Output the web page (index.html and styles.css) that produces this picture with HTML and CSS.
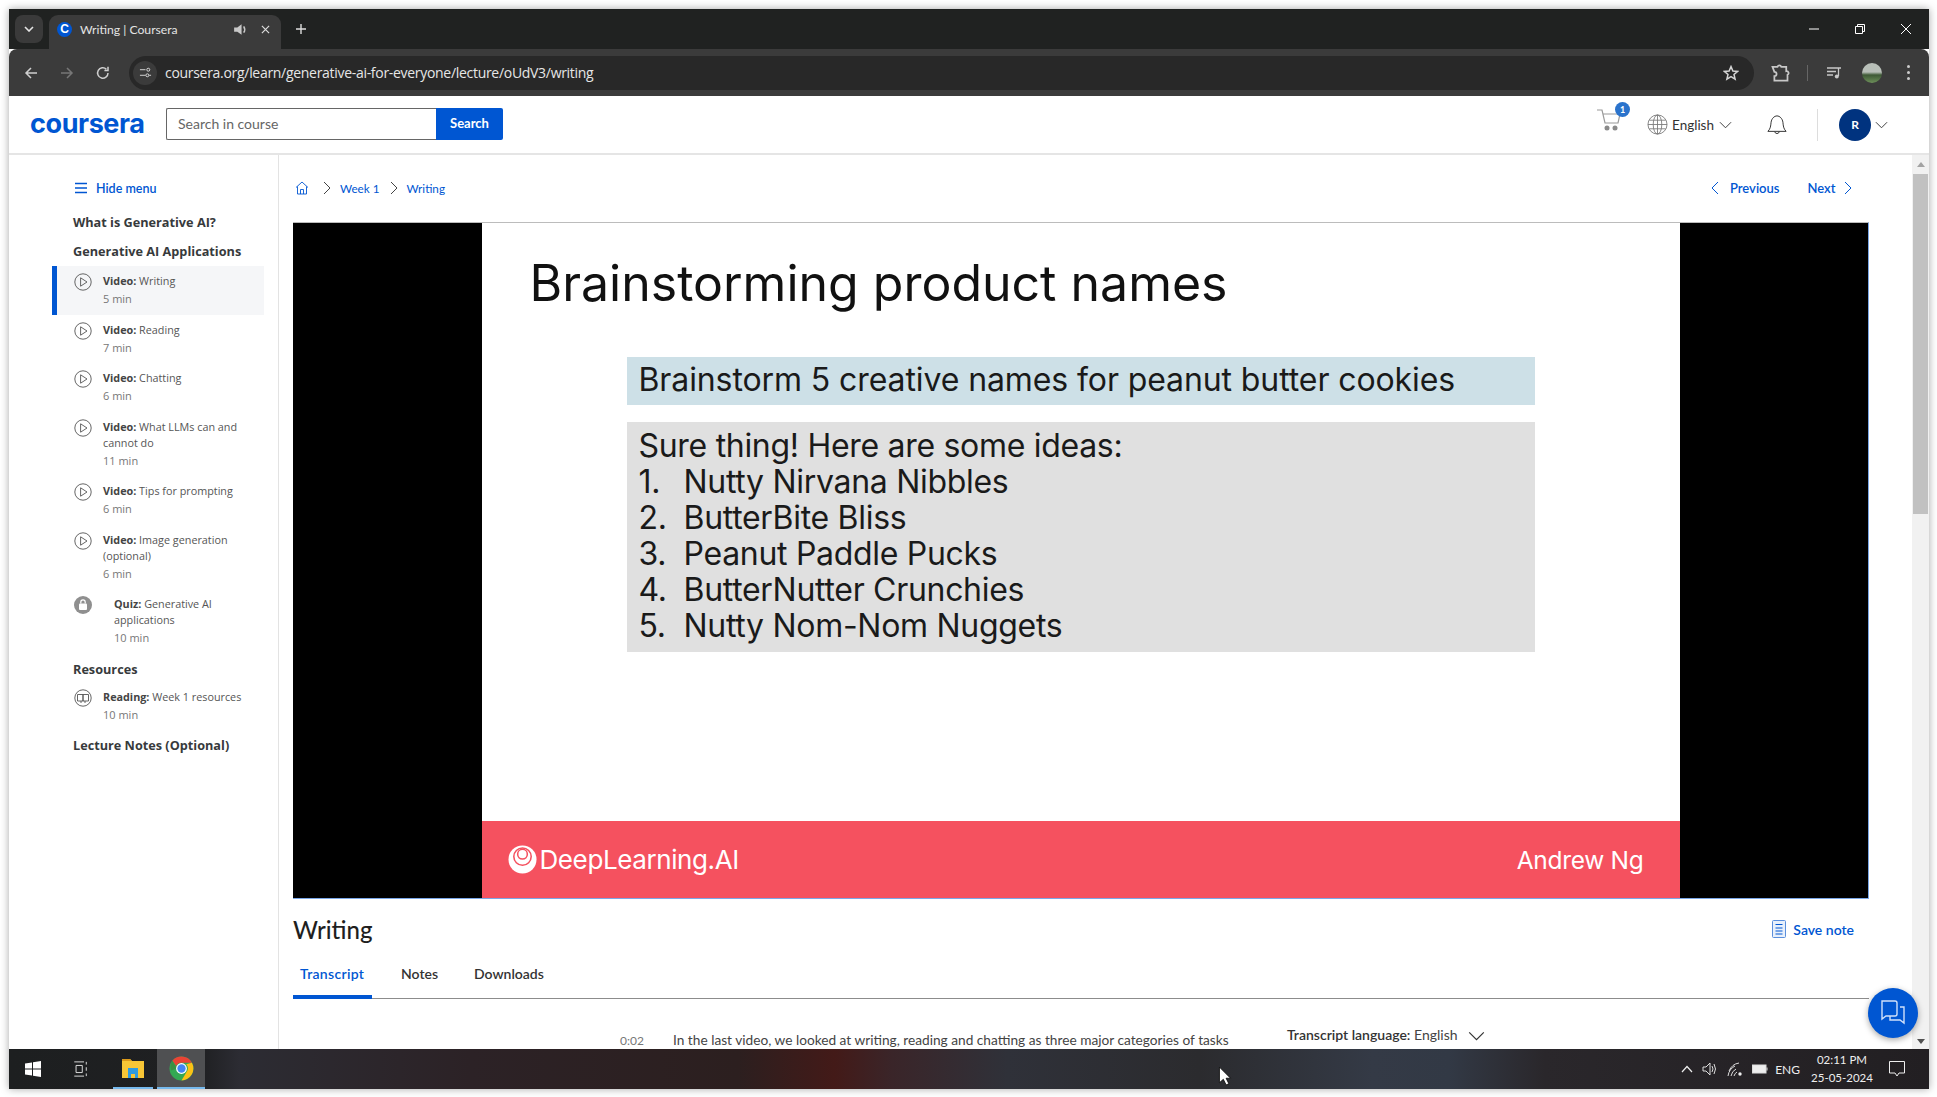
FILE: index.html
```html
<!DOCTYPE html>
<html>
<head>
    <meta charset="utf-8" />
    <title>Writing | Coursera</title>
    <link rel="stylesheet" href="styles.css">
</head>
<body>
    <svg class="defs" width="0" height="0">
        <symbol id="play" viewBox="0 0 18 18"><circle cx="9" cy="9" r="8.2" fill="none" stroke="#555" stroke-width="0.9"/><path d="M6.6 4.8 L13 9 L6.6 13.2 Z" fill="none" stroke="#555" stroke-width="0.9"/></symbol>
        <symbol id="chev" viewBox="0 0 14 8"><path d="M1 1 L7 7 L13 1" fill="none" stroke="currentColor" stroke-width="1"/></symbol>
        <symbol id="right" viewBox="0 0 8 14"><path d="M1 1 L7 7 L1 13" fill="none" stroke="currentColor" stroke-width="1"/></symbol>
    </svg>
    <div class="window">
        <!-- browser tabs -->
        <div class="tabbar">
            <div class="tablist"><svg class="ic10" viewBox="0 0 10 6"><path d="M1 1 L5 5 L9 1" fill="none" stroke="#e4e4e4" stroke-width="1.6"/></svg></div>
            <div class="tab">
                <span class="favicon">C</span>
                <span class="tabtitle">Writing | Coursera</span>
                <svg class="tabsound" viewBox="0 0 16 16"><path d="M2 6 H5 L9 3 V13 L5 10 H2 Z" fill="#c8c8c8"/><path d="M11 5 Q13 8 11 11" fill="none" stroke="#c8c8c8" stroke-width="1.4"/></svg>
                <svg class="tabclose" viewBox="0 0 10 10"><path d="M1 1 L9 9 M9 1 L1 9" stroke="#ddd" stroke-width="1.3"/></svg>
            </div>
            <svg class="newtab" viewBox="0 0 12 12"><path d="M6 1 V11 M1 6 H11" stroke="#ddd" stroke-width="1.4"/></svg>
            <div class="winbtns">
                <svg viewBox="0 0 12 12"><path d="M1 6 H11" stroke="#fff"/></svg>
                <svg viewBox="0 0 12 12"><path d="M1.5 3.5 H8.5 V10.5 H1.5 Z M3.5 3.5 V1.5 H10.5 V8.5 H8.5" fill="none" stroke="#fff"/></svg>
                <svg viewBox="0 0 12 12"><path d="M1 1 L11 11 M11 1 L1 11" stroke="#fff"/></svg>
            </div>
        </div>
        <div class="toolbar">
            <svg class="navbtn" viewBox="0 0 16 16"><path d="M14 8 H3 M8 3 L3 8 L8 13" fill="none" stroke="#cfcfcf" stroke-width="1.5"/></svg>
            <svg class="navbtn" viewBox="0 0 16 16"><path d="M2 8 H13 M8 3 L13 8 L8 13" fill="none" stroke="#777" stroke-width="1.5"/></svg>
            <svg class="navbtn" viewBox="0 0 16 16"><path d="M13 8 A5.2 5.2 0 1 1 11.4 4.2 M13 1.8 V5.4 H9.4" fill="none" stroke="#cfcfcf" stroke-width="1.5"/></svg>
            <div class="omnibox">
                <span class="siteicon"><svg viewBox="0 0 14 14"><path d="M1 4 H7 M11 10 H13 M1 10 H7" stroke="#ddd"/><circle cx="10" cy="4" r="1.6" fill="none" stroke="#ddd"/><circle cx="9" cy="10" r="1.6" fill="none" stroke="#ddd"/></svg></span>
                <span class="url">coursera.org/learn/generative-ai-for-everyone/lecture/oUdV3/writing</span>
                <svg class="star" viewBox="0 0 16 16"><path d="M8 1.6 L9.9 6 L14.6 6.4 L11 9.5 L12.1 14.2 L8 11.7 L3.9 14.2 L5 9.5 L1.4 6.4 L6.1 6 Z" fill="none" stroke="#d5d5d5" stroke-width="1.5"/></svg>
            </div>
            <svg class="extbtn" viewBox="0 0 16 16"><path d="M2 3 H6 A1.6 1.6 0 0 1 9 3 H13 V6.5 A1.6 1.6 0 0 1 14 9.5 V14 H3.5 V10.5 A1.6 1.6 0 0 0 3.5 7 Z" fill="none" stroke="#c8c8c8" stroke-width="1.4"/></svg>
            <span class="toolsep"></span>
            <svg class="mediabtn" viewBox="0 0 16 16"><path d="M1 3 H11 M1 6.5 H10 M1 10 H7 M11 3 H15 M12.5 3 V11" stroke="#c8c8c8" stroke-width="1.3" fill="none"/><circle cx="10.8" cy="11.6" r="2" fill="#c8c8c8"/></svg>
            <span class="profile"></span>
            <span class="dots"><i></i><i></i><i></i></span>
        </div>

        <!-- coursera header -->
        <header class="sitehead">
            <a class="logo">coursera</a>
            <div class="search">
                <span class="searchinput">Search in course</span>
                <span class="searchbtn">Search</span>
            </div>
            <div class="headright">
                <div class="cart">
                    <svg viewBox="0 0 26 24"><path d="M1 2 H6 L9 15 H22 L24 6 H7" fill="none" stroke="#9a9a9a" stroke-width="1.2"/><circle cx="11" cy="20" r="2.5" fill="#8a8a8a"/><circle cx="19" cy="20" r="2.5" fill="#8a8a8a"/></svg>
                    <span class="badge">1</span>
                </div>
                <svg class="globe" viewBox="0 0 22 22"><g fill="none" stroke="#777" stroke-width="0.9"><circle cx="11" cy="11" r="10"/><ellipse cx="11" cy="11" rx="4.5" ry="10"/><path d="M11 1 V21 M1 11 H21 M2.4 6.5 H19.6 M2.4 15.5 H19.6"/></g></svg>
                <span class="lang">English</span>
                <svg class="chev13"><use href="#chev"/></svg>
                <svg class="bell" viewBox="0 0 22 24"><path d="M1 19 C4 16 4 13 4.5 9 C5 5 8 2 11 2 C14 2 17 5 17.5 9 C18 13 18 16 21 19 Z M8.5 19.5 A2.6 2.6 0 0 0 13.5 19.5" fill="none" stroke="#222" stroke-width="1"/></svg>
                <span class="headsep"></span>
                <span class="avatar">R</span>
                <svg class="chev13"><use href="#chev"/></svg>
            </div>
        </header>

        <div class="content">
            <aside class="sidebar">
                <div class="hidemenu">
                    <svg viewBox="0 0 12 12"><path d="M0 1.5 H12 M0 6 H12 M0 10.5 H12" stroke="#0056d2" stroke-width="1.5"/></svg>
                    <span>Hide menu</span>
                </div>
                <h3 class="modhead first">What is Generative AI?</h3>
                <h3 class="modhead">Generative AI Applications</h3>
                <ul class="items">
                    <li class="item active"><svg class="itemicon"><use href="#play"/></svg><div><p><b>Video:</b> Writing</p><small>5 min</small></div></li>
                    <li class="item"><svg class="itemicon"><use href="#play"/></svg><div><p><b>Video:</b> Reading</p><small>7 min</small></div></li>
                    <li class="item"><svg class="itemicon"><use href="#play"/></svg><div><p><b>Video:</b> Chatting</p><small>6 min</small></div></li>
                    <li class="item"><svg class="itemicon"><use href="#play"/></svg><div><p><b>Video:</b> What LLMs can and cannot do</p><small>11 min</small></div></li>
                    <li class="item"><svg class="itemicon"><use href="#play"/></svg><div><p><b>Video:</b> Tips for prompting</p><small>6 min</small></div></li>
                    <li class="item"><svg class="itemicon"><use href="#play"/></svg><div><p><b>Video:</b> Image generation (optional)</p><small>6 min</small></div></li>
                    <li class="item quiz">
                        <svg class="itemicon" viewBox="0 0 18 18"><circle cx="9" cy="9" r="9" fill="#8f8f8f"/><rect x="5" y="7.5" width="8" height="6.5" rx="1" fill="#fff"/><path d="M6.8 7.5 V6 A2.2 2.2 0 0 1 11.2 6 V7.5" fill="none" stroke="#fff" stroke-width="1.2"/></svg>
                        <div><p><b>Quiz:</b> Generative AI applications</p><small>10 min</small></div>
                    </li>
                </ul>
                <h3 class="modhead res">Resources</h3>
                <ul class="items">
                    <li class="item">
                        <svg class="itemicon" viewBox="0 0 18 18"><circle cx="9" cy="9" r="8.2" fill="none" stroke="#555" stroke-width="0.9"/><path d="M3.5 5.5 H9 V12 H3.5 Z M9 5.5 H14.5 V12 H9 Z M7 12 V14 M11 12 V14" fill="none" stroke="#555" stroke-width="0.9"/></svg>
                        <div><p><b>Reading:</b> Week 1 resources</p><small>10 min</small></div>
                    </li>
                </ul>
                <h3 class="modhead last">Lecture Notes (Optional)</h3>
            </aside>

            <main class="main">
                <div class="crumbrow">
                    <svg class="home" viewBox="0 0 14 14"><path d="M1 6.5 L7 1 L13 6.5 M2.5 5.5 V13 H11.5 V5.5 M5.5 13 V8.5 H8.5 V13" fill="none" stroke="#0056d2" stroke-width="0.9"/></svg>
                    <svg class="sep"><use href="#right"/></svg>
                    <a class="crumb">Week 1</a>
                    <svg class="sep"><use href="#right"/></svg>
                    <a class="crumb">Writing</a>
                    <div class="pager">
                        <svg class="pagearrow flip"><use href="#right"/></svg>
                        <a>Previous</a>
                        <a class="nextlink">Next</a>
                        <svg class="pagearrow"><use href="#right"/></svg>
                    </div>
                </div>

                <div class="video">
                    <div class="slide">
                        <div class="slidebody">
                            <h1 class="slidetitle">Brainstorming product names</h1>
                            <div class="prompt">Brainstorm 5 creative names for peanut butter cookies</div>
                            <div class="answer">
                                <p>Sure thing! Here are some ideas:</p>
                                <ol>
                                    <li><span>1.</span>Nutty Nirvana Nibbles</li>
                                    <li><span>2.</span>ButterBite Bliss</li>
                                    <li><span>3.</span>Peanut Paddle Pucks</li>
                                    <li><span>4.</span>ButterNutter Crunchies</li>
                                    <li><span>5.</span>Nutty Nom-Nom Nuggets</li>
                                </ol>
                            </div>
                        </div>
                        <div class="slidefoot">
                            <svg viewBox="0 0 30 30"><circle cx="15" cy="15" r="14.5" fill="#fff"/><circle cx="15" cy="12" r="9" fill="none" stroke="#f5515f" stroke-width="1.6"/><circle cx="15" cy="9.5" r="5" fill="none" stroke="#f5515f" stroke-width="1.6"/></svg>
                            <span class="dl">DeepLearning.AI</span>
                            <span class="presenter">Andrew Ng</span>
                        </div>
                    </div>
                </div>

                <div class="titlerow">
                    <h2>Writing</h2>
                    <a class="savenote">
                        <svg viewBox="0 0 14 18"><rect x="0.5" y="0.5" width="13" height="17" rx="1" fill="#e8f0fb" stroke="#5b8fdc"/><path d="M3.5 4.5 H10.5 M3.5 8 H10.5 M3.5 11 H10.5 M3.5 14 H10.5" stroke="#0056d2"/></svg>
                        Save note
                    </a>
                </div>

                <nav class="tabs">
                    <a class="on">Transcript</a>
                    <a>Notes</a>
                    <a>Downloads</a>
                </nav>

                <div class="transcript">
                    <span class="time">0:02</span>
                    <span class="line">In the last video, we looked at writing, reading and chatting as three major categories of tasks</span>
                    <span class="tlang"><b>Transcript language:</b> English</span>
                    <svg class="chev18"><use href="#chev"/></svg>
                </div>
            </main>

            <div class="scrollbar">
                <span class="arrow up"></span>
                <span class="thumb"></span>
                <span class="arrow down"></span>
            </div>

            <div class="chatfab">
                <svg viewBox="0 0 28 28"><path d="M3 2 H16 A2 2 0 0 1 18 4 V15 A2 2 0 0 1 16 17 H7 L3 20 Z" fill="none" stroke="#cfe0fa" stroke-width="1.4"/><path d="M21 8 H25 V24 L21 21 H11 V17" fill="none" stroke="#cfe0fa" stroke-width="1.4"/></svg>
            </div>
        </div>

        <!-- windows taskbar -->
        <footer class="taskbar">
            <svg class="tb win" viewBox="0 0 16 16"><path d="M0 2.4 L7 1.4 V7.4 H0 Z M8 1.2 L16 0 V7.4 H8 Z M0 8.4 H7 V14.6 L0 13.6 Z M8 8.4 H16 V16 L8 14.8 Z" fill="#fff"/></svg>
            <svg class="tb view" viewBox="0 0 16 18"><path d="M1 1 H12 M1 17 H12 M3 5 H10 V13 H3 Z M14.5 1 V4 M14.5 7 V11 M14.5 14 V17" fill="none" stroke="#eee"/></svg>
            <div class="tbapp explorer">
                <svg viewBox="0 0 22 22"><path d="M0 2 H8 L10 4 H22 V21 H0 Z" fill="#f8c636"/><path d="M0 2 H8 L10 4 H0 Z" fill="#dc9a1a"/><path d="M6 11 H16 V21 H13 V17 H9 V21 H6 Z" fill="#2f9be0"/></svg>
            </div>
            <div class="tbapp chrome">
                <svg viewBox="0 0 24 24"><circle cx="12" cy="12" r="11.5" fill="#34a853"/><path d="M12 .5 A11.5 11.5 0 0 1 22 6.5 H12 A5.5 5.5 0 0 0 7 9.5 L3.2 4.5 A11.5 11.5 0 0 1 12 .5 Z" fill="#ea4335"/><path d="M22 6.5 A11.5 11.5 0 0 1 12 23.5 L17 15 A5.5 5.5 0 0 0 16.5 8 Z" fill="#fbc116"/><path d="M3.2 4.5 L7.5 12 L2 14 A11.5 11.5 0 0 1 3.2 4.5 Z" fill="#3b8f43"/><circle cx="12" cy="12" r="5.2" fill="#fff"/><circle cx="12" cy="12" r="4" fill="#4285f4"/></svg>
            </div>
            <div class="tray">
                <svg class="tr up" viewBox="0 0 12 8"><path d="M1 7 L6 1.5 L11 7" fill="none" stroke="#eee" stroke-width="1.2"/></svg>
                <svg class="tr" viewBox="0 0 16 16"><path d="M1 6 H4 L8 2 V14 L4 10 H1 Z M10 5 Q12 8 10 11 M12 3 Q15 8 12 13" fill="none" stroke="#ddd"/></svg>
                <svg class="tr" viewBox="0 0 16 16"><path d="M1 15 Q2 8 8 5 M4 15 Q5 10 9 8 M7 15 Q8 12 10 11 M2 10 Q5 3 12 2" fill="none" stroke="#ddd"/><circle cx="13" cy="13" r="1.7" fill="#eee"/></svg>
                <svg class="tr" viewBox="0 0 16 16"><rect x="0.5" y="4" width="13.5" height="8" fill="#eee" stroke="#ddd"/><path d="M15 6.5 V9.5" stroke="#ddd"/></svg>
                <span class="eng">ENG</span>
                <span class="clock">02:11 PM<br>25-05-2024</span>
                <svg class="notif" viewBox="0 0 16 16"><path d="M.5 .5 H15.5 V12 H10 L8 15 L6 12 H.5 Z" fill="none" stroke="#eee"/></svg>
            </div>
            <svg class="cursor" viewBox="0 0 12 18"><path d="M1 1 V15 L4.5 12 L7 17 L9.5 16 L7 11 H11 Z" fill="#fff" stroke="#000" stroke-width="0.7"/></svg>
        </footer>
    </div>
</body>
</html>
```

FILE: styles.css
```css
* {
    box-sizing: border-box;
}

html, body {
    margin: 0;
    padding: 0;
    background: #fff;
}

body {
    font-family: "Lato", sans-serif;
    color: #1f1f1f;
    height: 1097px;
    overflow: hidden;
}

a { color: #0056d2; }
ul, ol { list-style: none; margin: 0; padding: 0; }
h1, h2, h3, p { margin: 0; }

.defs { position: absolute; }

.window {
    width: 1920px;
    height: 1080px;
    margin: 9px 8px 8px 9px;
    display: flex;
    flex-direction: column;
    box-shadow: 0 0 8px rgba(0,0,0,.35);
    position: relative;
    overflow: hidden;
}

/* chrome */
.tabbar {
    height: 40px;
    background: #202221;
    display: flex;
    align-items: flex-end;
    padding-left: 6px;
    flex: none;
}
.tablist {
    width: 28px;
    height: 28px;
    margin-bottom: 6px;
    background: #3a3a3a;
    border-radius: 8px;
    display: flex;
    align-items: center;
    justify-content: center;
}
.ic10 { width: 10px; height: 6px; }
.tab {
    width: 232px;
    height: 34px;
    margin-left: 6px;
    background: #3b3b3b;
    border-radius: 9px 9px 0 0;
    display: flex;
    align-items: center;
    padding: 0 0 5px 8px;
}
.favicon {
    width: 15px;
    height: 15px;
    border-radius: 50%;
    background: #0056d2;
    color: #fff;
    font: 700 12px/15px "Liberation Sans", sans-serif;
    text-align: center;
}
.tabtitle {
    font-size: 12.2px;
    color: #e4e4e4;
    margin-left: 8px;
    width: 144px;
}
.tabsound { width: 17px; height: 17px; margin-left: 8px; }
.tabclose { width: 9px; height: 9px; margin-left: 12px; }
.newtab { width: 12px; height: 12px; margin: 0 0 14px 14px; }
.winbtns {
    margin-left: auto;
    margin-right: 17px;
    margin-bottom: 14px;
    display: flex;
    gap: 34px;
}
.winbtns svg { width: 12px; height: 12px; }

.toolbar {
    height: 47px;
    background: #3b3b3b;
    display: flex;
    align-items: center;
    padding-left: 14px;
    flex: none;
    border-radius: 8px 8px 0 0;
}
.navbtn { width: 16px; height: 16px; margin-right: 20px; }
.navbtn:nth-child(3) { margin-right: 18px; }
.omnibox {
    width: 1625px;
    height: 34px;
    background: #282828;
    border-radius: 17px;
    display: flex;
    align-items: center;
    padding-left: 4px;
}
.siteicon {
    width: 24px;
    height: 24px;
    border-radius: 50%;
    background: #3b3b3b;
    display: flex;
    align-items: center;
    justify-content: center;
}
.siteicon svg { width: 13px; height: 13px; }
.url {
    font: 14px "Open Sans", sans-serif;
    letter-spacing: -.3px;
    color: #e6e6e6;
    margin: -1px 0 0 8px;
}
.star { width: 16px; height: 16px; margin-left: auto; margin-right: 15px; }
.extbtn { width: 20px; height: 20px; margin-left: 16px; }
.toolsep { width: 1px; height: 16px; background: #666; margin-left: 17px; }
.mediabtn { width: 16px; height: 16px; margin-left: 18px; }
.profile {
    width: 20px;
    height: 20px;
    border-radius: 50%;
    margin-left: 20px;
    background: linear-gradient(#b8bfb8 0 45%, #3e5a36 60%, #6d8f5a);
}
.dots {
    display: flex;
    flex-direction: column;
    gap: 3px;
    margin-left: 25px;
}
.dots i { width: 3px; height: 3px; background: #ccc; border-radius: 50%; }

/* site header */
.sitehead {
    height: 59px;
    background: #fff;
    border-bottom: 2px solid #e5e5e5;
    display: flex;
    align-items: center;
    padding-left: 21px;
    flex: none;
}
.logo {
    font: 700 27px "Inter", sans-serif;
    letter-spacing: -.4px;
    width: 136px;
    margin-top: -2px;
}
.search { display: flex; height: 32px; margin-top: -1px; }
.searchinput {
    width: 270px;
    border: 1px solid #666;
    border-right: 0;
    border-radius: 2px 0 0 2px;
    font-size: 14px;
    line-height: 29px;
    padding-left: 11px;
    color: #666;
}
.searchbtn {
    width: 67px;
    background: #0056d2;
    color: #fff;
    font-size: 13px;
    font-weight: 700;
    text-align: center;
    line-height: 30px;
    border-radius: 0 2px 2px 0;
}
.headright {
    margin-left: auto;
    display: flex;
    align-items: center;
    height: 100%;
    padding-right: 41px;
}
.cart { position: relative; width: 26px; height: 24px; margin-top: -9px; }
.cart svg { width: 26px; height: 24px; display: block; }
.badge {
    position: absolute;
    left: 19px;
    top: -6px;
    width: 15px;
    height: 15px;
    border-radius: 50%;
    background: #2a73cc;
    color: #fff;
    font-size: 9px;
    font-weight: 700;
    line-height: 15px;
    text-align: center;
}
.globe { width: 21px; height: 21px; margin-left: 25px; }
.lang { font-size: 13.5px; color: #333; margin-left: 4px; }
.chev13 { width: 13px; height: 8px; margin-left: 5px; color: #333; }
.bell { width: 20px; height: 22px; margin-left: 35px; }
.headsep { width: 1px; height: 32px; background: #ddd; margin-left: 30px; }
.avatar {
    width: 32px;
    height: 32px;
    border-radius: 50%;
    background: #00337f;
    color: #fff;
    font-size: 12px;
    font-weight: 700;
    text-align: center;
    line-height: 32px;
    margin: 0 -1px 0 21px;
}

/* page */
.content {
    flex: 1;
    display: flex;
    background: #fff;
    position: relative;
    min-height: 0;
    overflow: hidden;
}
.sidebar {
    width: 270px;
    flex: none;
    border-right: 1px solid #e3e3e3;
    padding: 24px 0 0 43px;
    font-family: "Open Sans", sans-serif;
}
.hidemenu {
    display: flex;
    align-items: center;
    font-size: 12.5px;
    font-weight: 600;
    color: #0056d2;
    height: 18px;
    padding-left: 23px;
    font-family: "Lato", sans-serif;
}
.hidemenu svg { width: 12px; height: 12px; margin-right: 9px; }
.modhead {
    font-size: 12.7px;
    font-weight: 700;
    color: #373a3c;
    line-height: 18px;
    margin: 11px 0 0 21px;
}
.modhead.first { margin-top: 16px; }
.modhead.res { margin-top: 6px; }
.modhead.last { margin-top: 6px; }
.items { margin: 6px 0 0 0; width: 212px; }
.modhead.res + .items { margin-top: 4px; }
.item {
    display: flex;
    padding: 7px 0 7.5px 17px;
    border-left: 5px solid transparent;
    font-size: 10.8px;
    line-height: 16px;
    color: #555;
}
.item.active { background: #f5f6f8; border-left-color: #0056d2; }
.item b { font-weight: 700; color: #444; }
.item small {
    display: block;
    font-size: 11px;
    color: #777;
    margin-top: 2px;
    line-height: 16px;
}
.itemicon { width: 18px; height: 18px; flex: none; margin: 0 11px 0 0; color: #555; }
.item.quiz .itemicon { margin-right: 22px; }

.main {
    flex: 1;
    min-width: 0;
    padding: 21px 0 0 14px;
    width: 1633px;
}
.crumbrow {
    height: 24px;
    display: flex;
    align-items: center;
    font-size: 13px;
    width: 1576px;
}
.crumb { color: #0056d2; font-size: 11.7px; }
.home { width: 14px; height: 14px; margin-left: 2px; }
.sep { width: 8px; height: 14px; margin: 0 9px 0 14px; color: #444; }
.crumb + .sep { margin: 0 9px 0 10px; }
.pager {
    margin-left: auto;
    margin-right: 17px;
    display: flex;
    align-items: center;
    color: #0056d2;
    font-weight: 600;
}
.pagearrow { width: 8px; height: 14px; color: #0056d2; }
.pagearrow.flip { transform: scaleX(-1); margin-right: 11px; }
.nextlink { margin: 0 8.5px 0 28px; }

.video {
    width: 1576px;
    height: 677px;
    margin-top: 22px;
    background: #000;
    display: flex;
    justify-content: center;
    border-top: 1px solid #bcbcbc;
    border-right: 1px solid #7aa7e8;
    border-bottom: 1px solid #7aa7e8;
}
.slide {
    width: 1198px;
    height: 100%;
    background: #fff;
    display: flex;
    flex-direction: column;
    font-family: "Inter", sans-serif;
}
.slidebody { flex: 1; padding: 30px 145px 0 48px; }
.slidetitle {
    font-size: 50px;
    font-weight: 400;
    line-height: 60px;
    color: #111;
}
.prompt {
    margin: 44px 0 0 97px;
    height: 48px;
    background: #cde0e7;
    font-size: 32px;
    letter-spacing: -.1px;
    line-height: 46px;
    padding-left: 12px;
    color: #1a1a1a;
}
.answer {
    margin: 17px 0 0 97px;
    height: 230px;
    background: #e0e0e0;
    padding: 6px 12px;
    font-size: 32px;
    letter-spacing: -.3px;
    line-height: 36px;
    color: #1a1a1a;
}
.answer li { display: flex; }
.answer li span { width: 45px; }
.slidefoot {
    height: 77px;
    background: #f5515f;
    color: #fff;
    display: flex;
    align-items: center;
    padding: 0 36px 0 26px;
    flex: none;
}
.slidefoot svg { width: 29px; height: 29px; }
.dl { font-size: 26px; margin-left: 3px; letter-spacing: -.4px; }
.presenter { font-size: 24.5px; margin-left: auto; letter-spacing: -.3px; }

.titlerow {
    width: 1576px;
    display: flex;
    align-items: center;
    justify-content: space-between;
    margin-top: 12px;
    height: 36px;
}
.titlerow h2 { font-size: 24px; font-weight: 500; color: #1f1f1f; }
.savenote {
    display: flex;
    align-items: center;
    font-size: 14px;
    font-weight: 600;
    margin-right: 15px;
}
.savenote svg { width: 14px; height: 18px; margin-right: 7px; }
.tabs {
    width: 1576px;
    height: 45px;
    display: flex;
    align-items: flex-start;
    border-bottom: 1px solid #8c8c8c;
    margin-top: 7px;
    font-size: 14px;
    font-weight: 600;
    color: #333;
}
.tabs a {
    color: #333;
    margin-right: 36px;
    padding-top: 11px;
}
.tabs a.on {
    color: #0056d2;
    width: 79px;
    padding-left: 7px;
    letter-spacing: .3px;
    border-bottom: 4px solid #0056d2;
    margin-right: 29px;
    height: 45px;
}
.transcript {
    display: flex;
    align-items: center;
    margin-top: 32px;
    padding-left: 327px;
    font-size: 13.7px;
    color: #444;
}
.time { width: 53px; color: #777; font-size: 12px; padding-top: 2px; }
.line { width: 614px; white-space: nowrap; }
.tlang { margin-top: -10px; font-size: 14px; }
.tlang b { font-weight: 600; color: #333; }
.chev18 { width: 17px; height: 10px; margin: -8px 0 0 10px; color: #333; }

.scrollbar {
    width: 17px;
    flex: none;
    background: #f1f1f1;
    display: flex;
    flex-direction: column;
    align-items: center;
    padding-top: 7px;
}
.arrow { width: 0; height: 0; border-left: 4px solid transparent; border-right: 4px solid transparent; }
.arrow.up { border-bottom: 5px solid #a3a3a3; }
.arrow.down { border-top: 5px solid #505050; margin-top: 525px; }
.thumb { width: 15px; height: 340px; background: #c1c1c1; margin-top: 7px; }

.chatfab {
    position: absolute;
    right: 11px;
    bottom: 11px;
    width: 50px;
    height: 50px;
    border-radius: 50%;
    background: #0056d2;
    box-shadow: 0 2px 6px rgba(0,0,0,.35);
    display: flex;
    align-items: center;
    justify-content: center;
}
.chatfab svg { width: 28px; height: 28px; }

/* taskbar */
.taskbar {
    height: 40px;
    flex: none;
    display: flex;
    align-items: center;
    position: relative;
    background: linear-gradient(90deg, #1d1f20 0, #1f2022 10%, #2c2c33 12%, #2c2226 24%, #2c1f1f 38%, #431a18 43%, #3a2529 46%, #2f3139 52%, #2b2b2e 62%, #343a46 71%, #323945 75%, #2a272b 80%, #221f22 100%);
}
.tb { flex: none; }
.tb.win { width: 16px; height: 16px; margin-left: 16px; }
.tb.view { width: 15px; height: 16px; margin-left: 32px; }
.tbapp {
    height: 40px;
    display: flex;
    align-items: center;
    justify-content: center;
    border-bottom: 2px solid #76b9ed;
}
.explorer { width: 40px; margin-left: 25px; }
.explorer svg { width: 22px; height: 22px; }
.chrome { width: 48px; margin-left: 4px; background: #4f5052; }
.chrome svg { width: 25px; height: 25px; }
.tray {
    margin-left: auto;
    display: flex;
    align-items: center;
    color: #eee;
    padding-right: 24px;
}
.tr { width: 16px; height: 16px; margin-left: 9px; }
.tr.up { width: 12px; height: 8px; }
.eng { font-size: 12px; margin-left: 7px; }
.clock {
    font-size: 11.5px;
    line-height: 18px;
    text-align: center;
    width: 66px;
    margin-left: 9px;
}
.notif { width: 16px; height: 16px; margin-left: 14px; }
.cursor {
    position: absolute;
    left: 1209px;
    top: 17px;
    width: 14px;
    height: 20px;
}
```
